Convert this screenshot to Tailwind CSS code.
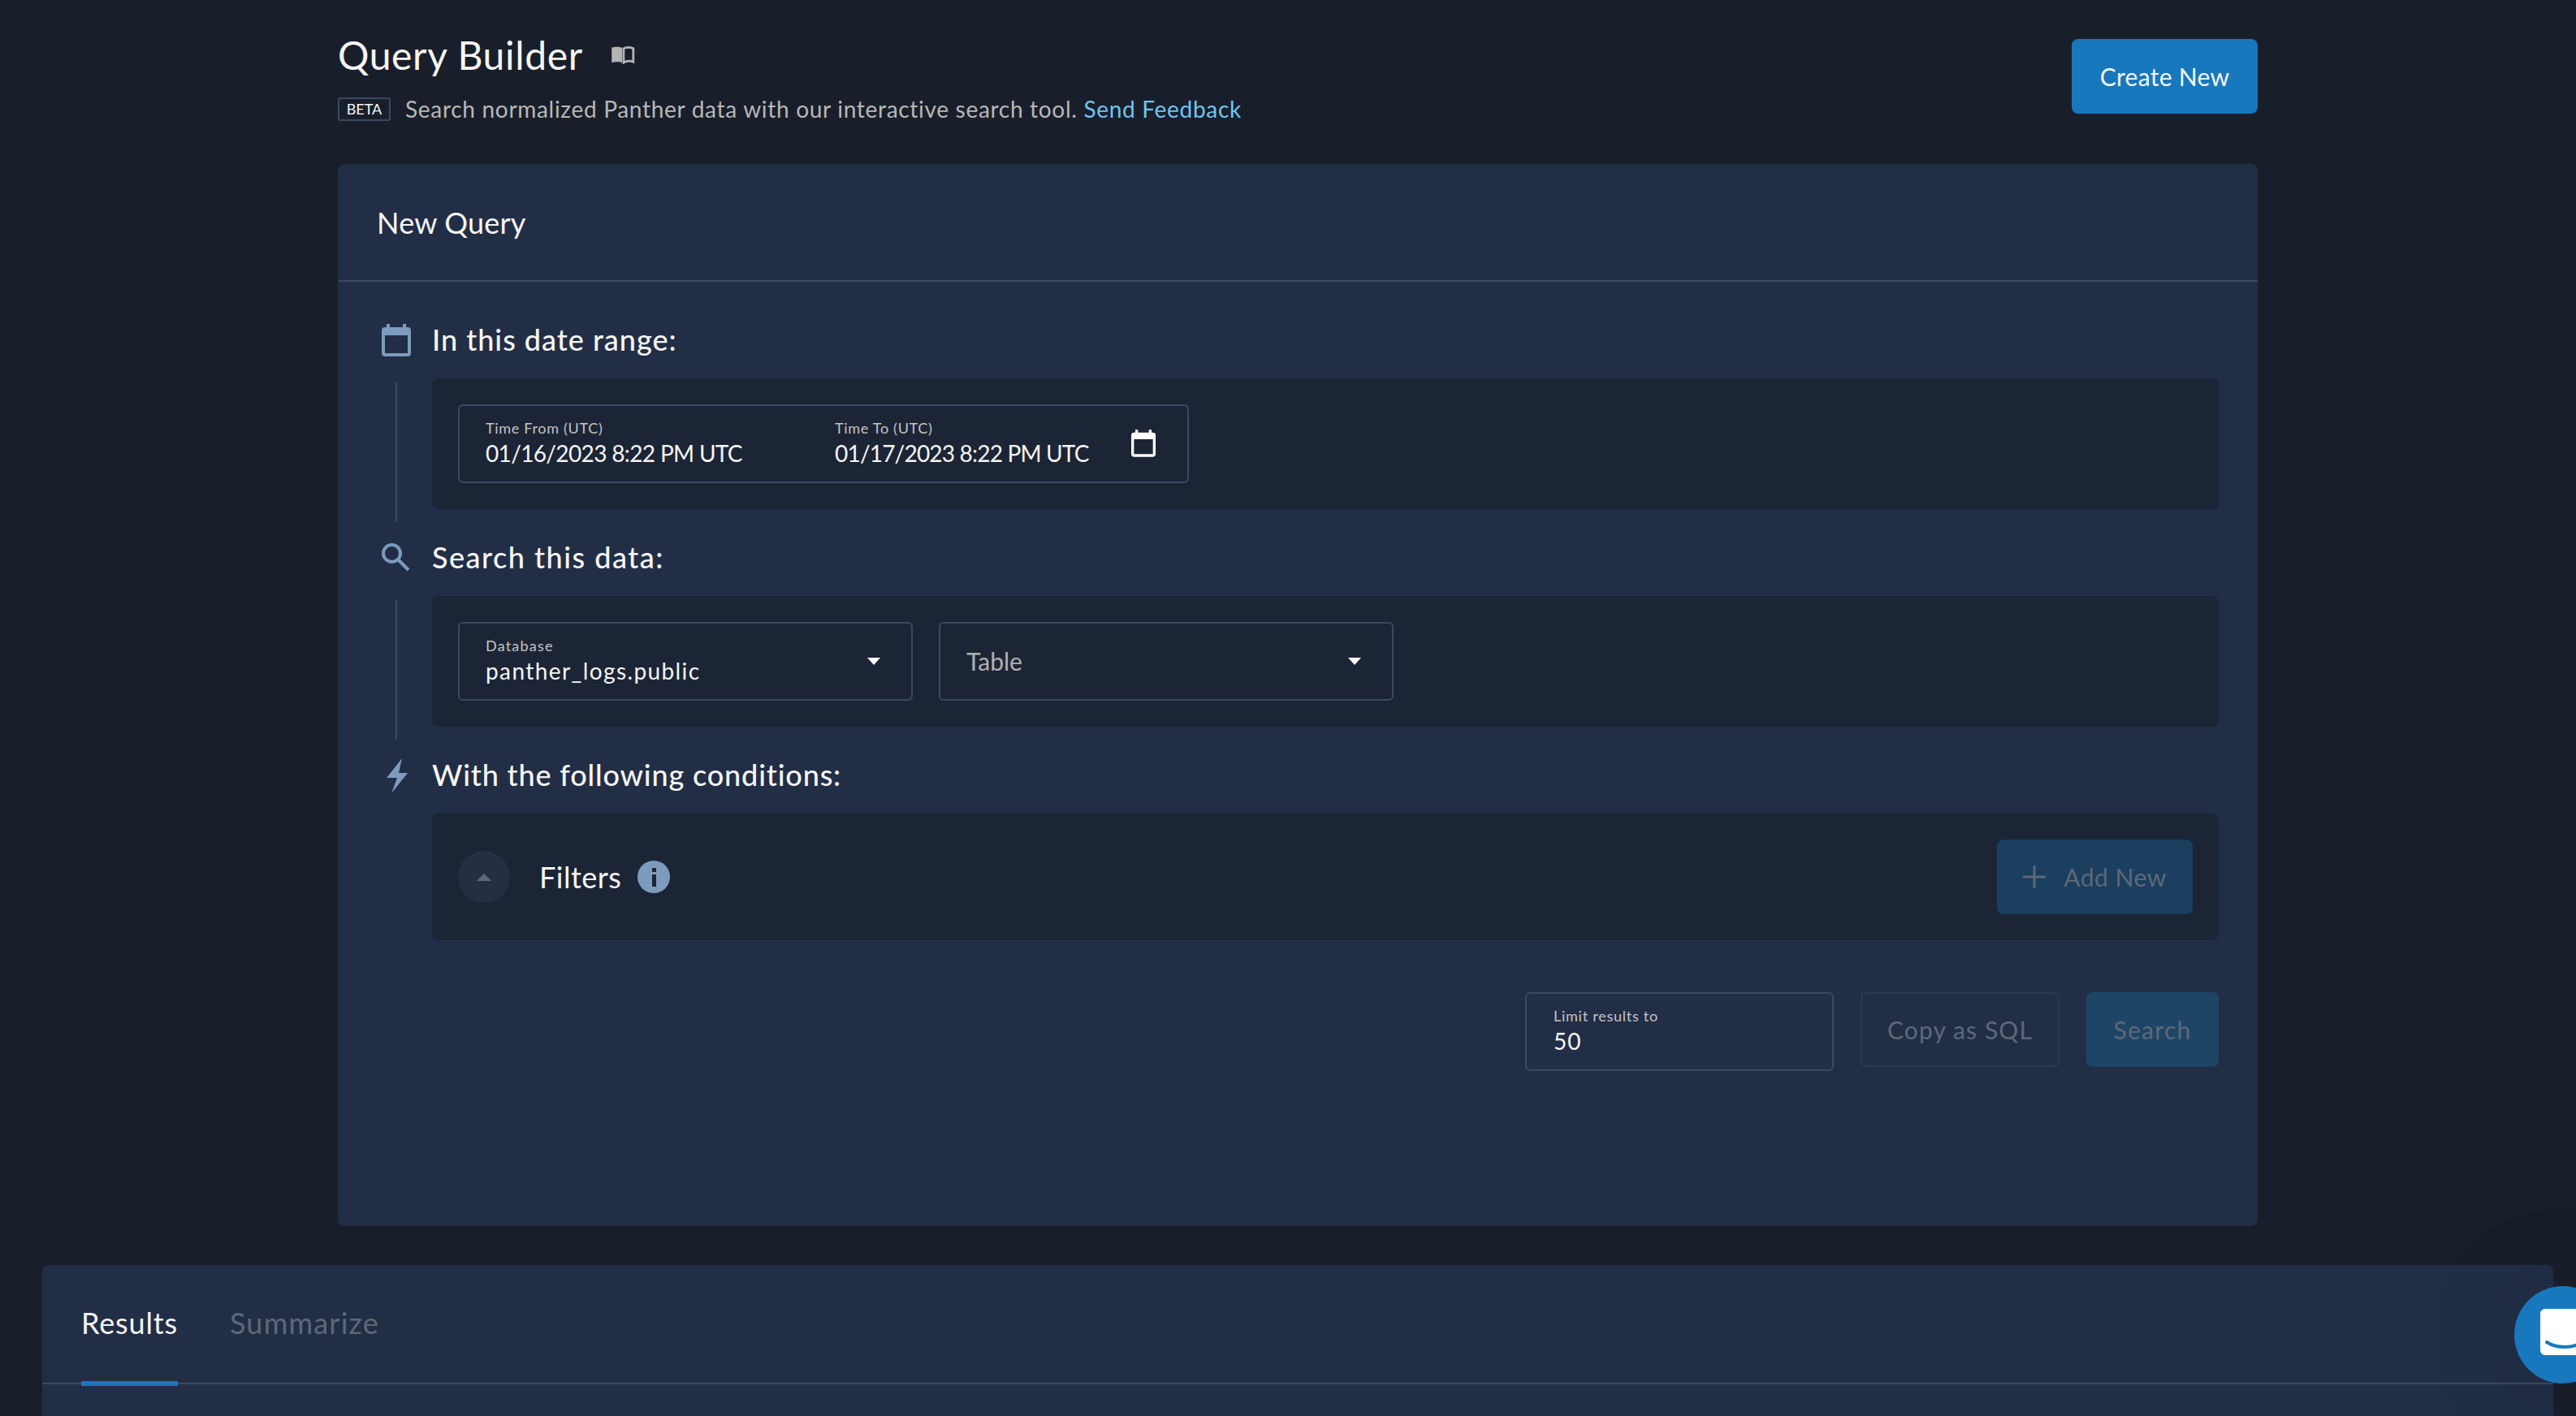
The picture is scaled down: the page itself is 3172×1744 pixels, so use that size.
<!DOCTYPE html>
<html lang="en">

<head>
    <meta charset="UTF-8">
    <title>Query Builder</title>
    <script src="https://cdn.jsdelivr.net/npm/@tailwindcss/browser@4"></script>
</head>

<body class="bg-[#191f2a] font-['Lato',sans-serif] text-[#f6f6f6] h-screen overflow-hidden relative">
    <!-- Page header -->
    <div class="w-[2364px] ml-[416px] h-[202px] flex justify-between items-start">
        <div class="pt-[40px]">
            <div class="flex items-center h-[56px]">
                <h1 class="text-[48px] leading-[56px] font-normal tracking-[0.65px]">Query Builder</h1>
                <svg class="ml-[34px] w-[30px] h-[22px]" viewBox="0 0 32 24" fill="none">
                    <path d="M1 2c4-1.500 10-1.500 14 0v20c-4-1.500-10-1.500-14 0z" fill="#b4b4b4" />
                    <path d="M17 3c4-1.800 9-1.800 13 0v18c-4-1.500-9-1.500-13 1z" stroke="#b4b4b4" stroke-width="3" />
                </svg>
            </div>
            <div class="flex items-center mt-[20px] h-[36px]">
                <span class="w-[65px] h-[29px] rounded-[3px] border-2 border-[#3a4a62] text-[18px] flex items-center justify-center">BETA</span>
                <p class="ml-[18px] text-[28px] tracking-[0.7px] text-[#b8b8b8]">Search normalized Panther data with our interactive search tool. <a href="#" class="text-[#6fc5f2]">Send Feedback</a></p>
            </div>
        </div>
        <button class="mt-[48px] w-[229px] h-[92px] rounded-[8px] bg-[#1878bd] text-[30px] tracking-[0.3px]">Create New</button>
    </div>

    <!-- New query panel -->
    <div class="w-[2364px] ml-[416px] h-[1308px] bg-[#222e46] rounded-[8px]">
        <div class="h-[145px] border-b-2 border-[#3a4a62] flex items-center pl-[48px]">
            <h2 class="text-[36px] font-normal tracking-[0.2px]">New Query</h2>
        </div>

        <div class="pl-[54px] pr-[48px] pt-[47px]">
            <!-- date range -->
            <section class="flex gap-[26px] mb-[35px]">
                <div class="w-[36px] flex flex-col items-center">
                    <svg class="w-[36px] h-[48px] pt-[5px] pb-[3px]" viewBox="0 0 36 40" fill="none">
                        <path d="M6 0h4v4H26V0h4v4h2a4 4 0 0 1 4 4v28a4 4 0 0 1-4 4H4a4 4 0 0 1-4-4V8a4 4 0 0 1 4-4h2zM4 14v22h28V14z" fill="#7d9bbd" fill-rule="evenodd" />
                    </svg>
                    <div class="w-[2px] flex-1 mt-[29px] -mb-[16px] bg-[#3a4a62]"></div>
                </div>
                <div class="flex-1">
                    <h3 class="h-[48px] leading-[48px] text-[36px] font-medium tracking-[1px] mb-[24px]">In this date range:</h3>
                    <div class="h-[161px] bg-[#1c2535] rounded-[8px] p-[32px]">
                        <div class="w-[900px] h-[97px] border-2 border-[#3a4a62] rounded-[6px] flex items-center pl-[32px]">
                            <div class="w-[430px] mb-[3px]">
                                <div class="text-[18px] leading-[22px] tracking-[0.7px] mb-[3px] text-[#c4c4c4]">Time From (UTC)</div>
                                <div class="text-[28px] leading-[34px] tracking-[-0.65px]">01/16/2023 8:22 PM UTC</div>
                            </div>
                            <div class="w-[365px] mb-[3px]">
                                <div class="text-[18px] leading-[22px] tracking-[0.7px] mb-[3px] text-[#c4c4c4]">Time To (UTC)</div>
                                <div class="text-[28px] leading-[34px] tracking-[-0.8px]">01/17/2023 8:22 PM UTC</div>
                            </div>
                            <svg class="w-[30px] h-[34px] mb-[2px]" viewBox="0 0 36 40" fill="none">
                                <path d="M6 0h4v4H26V0h4v4h2a4 4 0 0 1 4 4v28a4 4 0 0 1-4 4H4a4 4 0 0 1-4-4V8a4 4 0 0 1 4-4h2zM4 14v22h28V14z" fill="#ffffff" fill-rule="evenodd" />
                            </svg>
                        </div>
                    </div>
                </div>
            </section>

            <!-- data source -->
            <section class="flex gap-[26px] mb-[35px]">
                <div class="w-[36px] flex flex-col items-center">
                    <svg class="w-[36px] h-[48px]" viewBox="0 0 36 48" fill="none">
                        <circle cx="12.500" cy="19.500" r="10.500" stroke="#7d9bbd" stroke-width="4" />
                        <path d="M20 27l13 13" stroke="#7d9bbd" stroke-width="4" />
                    </svg>
                    <div class="w-[2px] flex-1 mt-[29px] -mb-[16px] bg-[#3a4a62]"></div>
                </div>
                <div class="flex-1">
                    <h3 class="h-[48px] leading-[48px] text-[36px] font-medium tracking-[1.5px] mb-[24px]">Search this data:</h3>
                    <div class="h-[161px] bg-[#1c2535] rounded-[8px] p-[32px] flex gap-[32px]">
                        <div class="w-[560px] h-[97px] border-2 border-[#3a4a62] rounded-[6px] flex items-center justify-between pl-[32px] pr-[38px]">
                            <div class="mb-[3px]">
                                <div class="text-[18px] leading-[22px] tracking-[1.2px] mb-[3px] text-[#c4c4c4]">Database</div>
                                <div class="text-[28px] leading-[34px] tracking-[1.4px]">panther_logs.public</div>
                            </div>
                            <div class="w-0 h-0 border-x-[8px] border-x-transparent border-t-[9px] border-t-white"></div>
                        </div>
                        <div class="w-[560px] h-[97px] border-2 border-[#3a4a62] rounded-[6px] flex items-center justify-between pl-[32px] pr-[38px]">
                            <div class="text-[30px] text-[#b0b0b0] mb-[1px]">Table</div>
                            <div class="w-0 h-0 border-x-[8px] border-x-transparent border-t-[9px] border-t-white"></div>
                        </div>
                    </div>
                </div>
            </section>

            <!-- conditions -->
            <section class="flex gap-[26px]">
                <div class="w-[36px] flex flex-col items-center">
                    <svg class="w-[36px] h-[48px]" viewBox="0 0 36 48" fill="none">
                        <path d="M25 4L6 28h13l-7 19 20-25H21z" fill="#7d9bbd" />
                    </svg>
                </div>
                <div class="flex-1">
                    <h3 class="h-[48px] leading-[48px] text-[36px] font-medium tracking-[0.85px] mb-[24px]">With the following conditions:</h3>
                    <div class="h-[156px] bg-[#1c2535] rounded-[8px] pl-[32px] pr-[32px] flex items-center">
                        <button class="w-[64px] h-[64px] rounded-full bg-[#242f42] flex items-center justify-center">
                            <span class="w-0 h-0 border-x-[9px] border-x-transparent border-b-[9px] border-b-[#5f6877]"></span>
                        </button>
                        <span class="ml-[36px] text-[36px] tracking-[0.5px]">Filters</span>
                        <span class="ml-[20px] w-[40px] h-[40px] rounded-full bg-[#7d9bbd] flex flex-col items-center justify-center">
                            <span class="w-[5px] h-[5px] bg-[#1c2535]"></span>
                            <span class="w-[5px] h-[15px] mt-[3px] bg-[#1c2535]"></span>
                        </span>
                        <button class="ml-auto w-[241px] h-[92px] rounded-[8px] bg-[#1a3f5f] text-[#5e6877] text-[30px] flex items-center justify-center gap-[22px]">
                            <svg class="w-[28px] h-[28px]" viewBox="0 0 28 28"><path d="M12.500 0h3v12.500H28v3H15.500V28h-3V15.500H0v-3h12.500z" fill="#5e6877" /></svg>
                            <span class="tracking-[0.5px]">Add New</span>
                        </button>
                    </div>
                </div>
            </section>

            <!-- limit and actions -->
            <div class="flex justify-end items-start gap-[33px] mt-[64px]">
                <div class="w-[380px] h-[97px] border-2 border-[#3a4a62] rounded-[6px] pl-[33px] pb-[3px] flex flex-col justify-center">
                    <div class="text-[18px] leading-[22px] tracking-[0.75px] mb-[3px] text-[#c4c4c4]">Limit results to</div>
                    <div class="text-[28px] leading-[34px] tracking-[1px]">50</div>
                </div>
                <button class="w-[245px] h-[92px] rounded-[8px] border-2 border-[#2c3a50] text-[#5e6877] text-[30px] tracking-[1.1px]">Copy as SQL</button>
                <button class="w-[163px] h-[92px] rounded-[8px] bg-[#1e4566] text-[#5e6877] text-[30px] tracking-[1.3px]">Search</button>
            </div>
        </div>
    </div>

    <!-- Results panel -->
    <div class="w-[3092px] ml-[52px] mt-[48px] h-[200px] bg-[#222e46] rounded-t-[8px]">
        <div class="h-[147px] border-b-2 border-[#3a4a62] flex pl-[48px] gap-[64px] text-[36px]">
            <div class="h-[149px] border-b-[6px] border-[#1878bd] flex items-center pb-[2px] tracking-[0.85px]">Results</div>
            <div class="h-[149px] border-b-[6px] border-transparent flex items-center pb-[2px] tracking-[1.2px] text-[#5e6877]">Summarize</div>
        </div>
    </div>

    <!-- Chat launcher -->
    <div class="absolute left-[3096px] top-[1584px] w-[120px] h-[120px] rounded-full bg-[#1878bd] shadow-[0_0_120px_rgba(0,0,0,0.15)]">
        <svg class="absolute left-[32px] top-[28px] w-[60px] h-[62px]" viewBox="0 0 60 62">
            <rect width="60" height="57" rx="6" fill="#fff" />
            <path d="M8 41c12 8 32 8 44 0" stroke="#1878bd" stroke-width="4" fill="none" stroke-linecap="round" />
        </svg>
    </div>
</body>

</html>
